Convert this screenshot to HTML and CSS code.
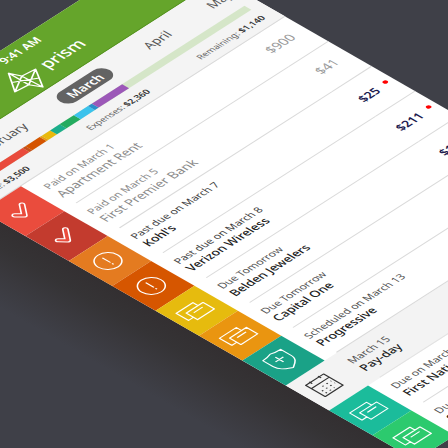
FILE: index.html
```
<!DOCTYPE html>
<html lang="en">
<head>
<meta charset="utf-8">
<title>Prism bills</title>
<link rel="stylesheet" href="styles.css">
</head>
<body>
<svg class="defs" width="0" height="0" aria-hidden="true">
  <symbol id="check" viewBox="0 0 24 24" overflow="visible"><path class="check-edge" d="M4.500 11.500 9 16.500 17 6.500"/><path class="check-core" d="M4.500 11.500 9 16.500 17 6.500"/></symbol>
  <symbol id="alert" viewBox="0 0 24 24"><circle cx="11" cy="11.500" r="9.800"/><path d="M11 6v8M11 15.500v1.500"/></symbol>
  <symbol id="cards" viewBox="0 0 24 24" overflow="visible"><path d="M17 9V4H0V16H5M5 9H22V20H5ZM9 12.500H18"/></symbol>
  <symbol id="shield" viewBox="0 0 24 24" overflow="visible"><path d="M2 2Q7 2 11 .5Q15 2 20 2V12C20 18 16 20 11 23C6 20 2 18 2 12ZM11 5.500v8M7 9.500h8"/></symbol>
  <symbol id="calendar" viewBox="0 0 24 24" overflow="visible"><path d="M2 1.500H20V20.500H2ZM2 7H20M6.500 .5v3M15.500 .5v3"/><path stroke-dasharray="1.200 3" d="M9 11H18M5 14.500H18M5 18H14"/></symbol>
</svg>
<div class="shadow"></div>
<main class="phone">
  <header class="nav">
    <div class="status">9:41 AM</div>
    <div class="brand">
      <svg class="logo" viewBox="0 0 34 34"><path d="M15 3 19 12.500 32 14 20 33 15 23.500 2 22ZM15 3V23.500L32 14M20 33 19 12.500 2 22M8.500 12.500 26 23.500"/></svg>
      <span>prism</span>
    </div>
  </header>
  <section class="summary">
    <div class="months"><span>February</span><span class="current">March</span><span>April</span><span>May</span></div>
    <div class="bar"><i class="b1"></i><i class="b2"></i><i class="b3"></i><i class="b4"></i><i class="b5"></i><i class="b6"></i><i class="b7"></i><i class="b8"></i><i class="b9"></i><i class="b10"></i></div>
    <div class="totals"><span>Income: <b>$3,500</b></span><span>Expenses: <b>$2,360</b></span><span>Remaining: <b>$1,140</b></span></div>
  </section>
  <ul class="bills">
    <li class="paid"><div class="tile red"><svg><use href="#check"/></svg></div><div class="info"><p>Paid on March 1</p><h2>Apartment Rent</h2></div><span class="amount">$900</span></li>
    <li class="paid"><div class="tile crimson"><svg><use href="#check"/></svg></div><div class="info"><p>Paid on March 5</p><h2>First Premier Bank</h2></div><span class="amount">$41</span></li>
    <li class="late"><div class="tile orange"><svg><use href="#alert"/></svg></div><div class="info"><p>Past due on March 7</p><h2>Kohl's</h2></div><span class="amount">$25</span></li>
    <li class="late"><div class="tile rust"><svg><use href="#alert"/></svg></div><div class="info"><p>Past due on March 8</p><h2>Verizon Wireless</h2></div><span class="amount">$211</span></li>
    <li><div class="tile yellow"><svg><use href="#cards"/></svg></div><div class="info"><p>Due Tomorrow</p><h2>Belden Jewelers</h2></div><span class="amount">$175</span></li>
    <li><div class="tile amber"><svg><use href="#cards"/></svg></div><div class="info"><p>Due Tomorrow</p><h2>Capital One</h2></div></li>
    <li><div class="tile teal"><svg><use href="#shield"/></svg></div><div class="info"><p>Scheduled on March 13</p><h2>Progressive</h2></div></li>
    <li class="payday"><div class="tile"><svg><use href="#calendar"/></svg></div><div class="info"><p>March 15</p><h2>Pay-day</h2></div></li>
    <li><div class="tile aqua"><svg><use href="#cards"/></svg></div><div class="info"><p>Due on March 16</p><h2>First National</h2></div></li>
    <li><div class="tile green"><svg><use href="#cards"/></svg></div><div class="info"><p>Due on March 18</p><h2>Sprint</h2></div></li>
  </ul>
</main>
</body>
</html>
```
FILE: styles.css
```
* { box-sizing: border-box; margin: 0; padding: 0; }
html, body { width: 448px; height: 448px; overflow: hidden; }
body { background: #3f4048; font-family: "Noto Sans", sans-serif; position: relative; }
.defs { position: absolute; }
.phone, .shadow { position: absolute; left: 0; top: 0; width: 320px; transform-origin: 0 0; transform: matrix(.948, -.608, .986, .566, -140.2, 141); }
.phone { background: #fff; }
.shadow { width: 75px; height: 900px; transform: matrix(.948, -.608, .986, .566, -211.3, 186.600); background: linear-gradient(to left, #332f31 0%, #353335 30%, #3a393e 62%, rgba(63, 64, 72, 0) 100%); }
.nav { height: 57px; background: #65a52b; color: #fff; border-bottom: 1px solid #559220; }
.status { height: 18px; line-height: 20px; font-size: 10.300px; font-weight: 600; text-align: center; padding-right: 3px; }
.brand { display: flex; align-items: center; padding-left: 118px; height: 38px; gap: 5px; }
.logo { width: 34px; height: 34px; fill: none; stroke: #fff; stroke-width: 1.300; stroke-linejoin: round; }
.brand span { font-size: 15px; font-weight: 500; line-height: 20px; margin-top: -5px; margin-left: -1px; }
.summary { height: 66.5px; background: #f4f4f4; border-bottom: 1px solid #d9d9d9; color: #555; }
.months { display: grid; grid-template-columns: 50px 52px 28px 31px; column-gap: 36px; justify-content: start; padding: 9px 0 0 48px; height: 35.5px; font-size: 11.200px; line-height: 18px; text-align: center; }
.current { background: #636363; color: #fff; font-weight: 600; border-radius: 9px; height: 17px; line-height: 17px; }
.bar { display: flex; height: 7.5px; margin: 0 11px; background: #d5e6c8; }
.b1 { width: 63.5px; background: #e94b3c; }
.b2 { width: 3px; background: #c8501c; }
.b3 { width: 15.500px; background: #d55500; }
.b4 { width: 2px; background: #eb9a12; }
.b5 { width: 8.500px; background: #e9b90c; }
.b6 { width: 10.500px; background: #1bae8c; }
.b7 { width: 15px; background: #24ab5f; }
.b8 { width: 14.500px; background: #3bc2ec; }
.b9 { width: 4px; background: #2b8ecb; }
.b10 { width: 32.500px; background: #9c58b8; }
.totals { display: grid; grid-template-columns: 96px 67px 1fr; column-gap: 24px; padding: 5.500px 11px 0 4px; font-size: 7.900px; line-height: 12px; color: #666; white-space: nowrap; }
.totals span:last-child { text-align: right; }
.totals b { font-weight: 600; color: #333; }
.bills { list-style: none; }
.bills li { display: flex; height: 44px; color: #222; }
.tile { width: 41px; flex: none; display: flex; align-items: center; justify-content: center; }
.tile svg { width: 25px; height: 25px; overflow: visible; fill: none; stroke: #fff; stroke-width: 1.100; stroke-linejoin: round; }
.check-edge, .check-core { stroke-linecap: round; }
.check-edge { stroke-width: 4.800; }
.check-core { stroke: #ea4c3d; stroke-width: 2.500; }
.crimson .check-core { stroke: #c33b2e; }
.info { flex: 1; margin-left: 13px; padding-top: 8px; border-bottom: 1px solid #dadada; white-space: nowrap; }
.info p { font-size: 9.300px; line-height: 14px; color: #555; margin-left: -2px; }
.info h2 { font-size: 10.600px; line-height: 13px; font-weight: 500; margin: -1px 0 0 -2px; }
.amount { width: 42px; padding-right: 17px; display: flex; justify-content: flex-end; font-size: 10.800px; line-height: 43px; font-weight: 600; color: #1a1a4f; border-bottom: 1px solid #dadada; position: relative; }
.paid p, .paid h2 { color: #8b8b8b; font-weight: 400; }
.info p + h2 { letter-spacing: 0; }
.paid .info h2 { font-size: 11.300px; }
.paid .amount { color: #999; font-size: 11.500px; font-weight: 400; padding-right: 13px; line-height: 40px; }
.late .amount::after { content: ""; position: absolute; width: 4.400px; height: 4.400px; border-radius: 50%; background: #f00; right: 5px; top: 18px; }
.late p { color: #444; }
.red { background: #ea4c3d; }
.crimson { background: #c33b2e; }
.orange { background: #e47b20; }
.rust { background: #d65600; }
.yellow { background: #e6bb0e; }
.amber { background: #ea9510; }
.teal { background: #1aa287; }
.aqua { background: #1bbc9b; }
.green { background: #2cca6e; }
.bills .payday { background: #f3f3f3; }
.payday svg { stroke: #333; }
.payday .info { border-bottom-color: #e2e2e2; }
```
